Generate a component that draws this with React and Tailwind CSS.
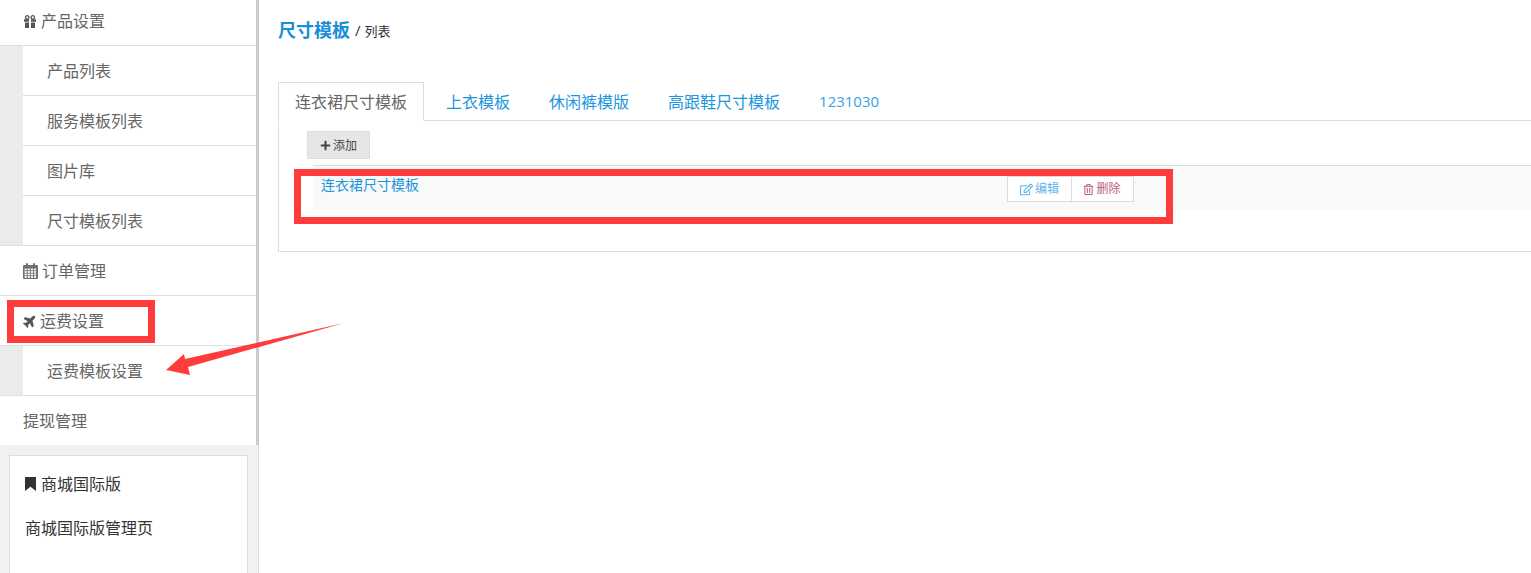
import { FaPlane, FaPlus, FaRegEdit, FaRegTrashAlt } from "react-icons/fa";

function GiftIcon() {
  return (
    <svg width="14" height="13" viewBox="0 0 14 13" className="mr-[4px] shrink-0">
      <circle cx="4.2" cy="2.4" r="1.7" fill="none" stroke="#555" strokeWidth="1.3" />
      <circle cx="9.8" cy="2.4" r="1.7" fill="none" stroke="#555" strokeWidth="1.3" />
      <path d="M1 4.2h5v2.6H1zM8 4.2h5v2.6H8zM2 7.6h4V13H2zM8 7.6h4V13H8z" fill="#555" />
    </svg>
  );
}

function CalendarIcon() {
  const cells = [];
  for (let r = 0; r < 4; r++) {
    for (let c = 0; c < 4; c++) {
      cells.push(<rect key={`${r}-${c}`} x={1.6 + c * 3.1} y={5.6 + r * 2.5} width="2.2" height="1.7" fill="#fff" />);
    }
  }
  return (
    <svg width="15" height="16" viewBox="0 0 15 16" className="mr-[4px] shrink-0">
      <rect x="0" y="2" width="15" height="14" rx="1.2" fill="#707070" />
      <rect x="3" y="0" width="2" height="4" rx="1" fill="#707070" />
      <rect x="10" y="0" width="2" height="4" rx="1" fill="#707070" />
      {cells}
    </svg>
  );
}

function BookmarkIcon() {
  return (
    <svg width="11" height="14" viewBox="0 0 11 14" className="mr-[5px] shrink-0">
      <path d="M0 0h11v14l-5.5-4.2L0 14z" fill="#333" />
    </svg>
  );
}

function SubMenu({ items }) {
  return (
    <div className="flex bg-[#ebebeb] border-b border-[#e0e0e0]">
      <div className="w-[23px]" />
      <div className="flex-1 bg-white">
        {items.map((name, i) => (
          <div
            key={name}
            className={
              i === items.length - 1
                ? "h-[49px] pl-6 flex items-center text-[#666]"
                : "h-[50px] pl-6 flex items-center text-[#666] border-b border-[#e0e0e0]"
            }
          >
            {name}
          </div>
        ))}
      </div>
    </div>
  );
}

function MenuRow({ icon, children, className = "h-[50px]" }) {
  return (
    <div className={`${className} pl-[23px] flex items-center text-[#666] border-b border-[#e0e0e0]`}>
      {icon}
      {children}
    </div>
  );
}

function Sidebar() {
  return (
    <div className="w-[259px] shrink-0 flex flex-col text-base">
      <div className="w-[259px] border-r-[3px] border-[#cccccc] bg-white">
        <MenuRow className="h-[46px] pb-[3px]" icon={<GiftIcon />}>
          产品设置
        </MenuRow>
        <SubMenu items={["产品列表", "服务模板列表", "图片库", "尺寸模板列表"]} />
        <MenuRow icon={<CalendarIcon />}>订单管理</MenuRow>
        <MenuRow icon={<FaPlane className="text-[14px] text-[#555] mr-[3px] -rotate-45" />}>运费设置</MenuRow>
        <SubMenu items={["运费模板设置"]} />
        <div className="h-[49px] pl-[23px] flex items-center text-[#666]">提现管理</div>
      </div>
      <div className="flex-1 bg-[#f1f1f1] pt-[10px] pl-[9px] pr-[10px] border-r border-[#dddddd]">
        <div className="h-[200px] bg-white border border-[#dddddd] text-[#333] pl-[15px]">
          <div className="flex items-center mt-[17px] h-[22px]">
            <BookmarkIcon />
            商城国际版
          </div>
          <div className="mt-[22px] h-[22px] flex items-center">商城国际版管理页</div>
        </div>
      </div>
    </div>
  );
}

function Tabs() {
  const tabs = ["上衣模板", "休闲裤模版", "高跟鞋尺寸模板"];
  return (
    <div className="flex h-[39px] border-b border-[#dddddd] gap-[5px] text-base">
      <div className="h-[39px] px-4 pt-px border border-b-white border-[#dddddd] bg-white text-[#666] flex items-center">
        连衣裙尺寸模板
      </div>
      {tabs.map(t => (
        <div key={t} className="px-[17px] pt-px flex items-center text-[#1b95e0]">
          {t}
        </div>
      ))}
      <div className="px-[17px] pt-px flex items-center text-[15px] text-[#3a9fe0]">1231030</div>
    </div>
  );
}

export default function App() {
  return (
    <div className="relative h-screen overflow-hidden flex bg-white [font-family:'Open_Sans','Noto_Sans_CJK_SC',sans-serif]">
      <Sidebar />
      <div className="pl-[19px] w-[1300px] shrink-0">
        <div className="flex items-start pt-[17px] h-[82px]">
          <span className="text-lg font-bold text-[#1a8fd8] leading-[26px]">尺寸模板</span>
          <span className="ml-[5px] text-[13px] text-[#333] leading-[26px]">
            <span className="text-[15px] mr-[4px]">/</span>列表
          </span>
        </div>
        <Tabs />
        <div className="h-[131px] border-x border-b border-[#dddddd] pt-[10px] pl-[28px]">
          <button className="h-7 w-[63px] pt-px flex items-center justify-center bg-[#e6e6e6] border border-[#dddddd] text-xs text-[#444]">
            <FaPlus className="text-[11px] mr-[2px]" />
            添加
          </button>
          <div className="mt-[6px] ml-[6px] h-[45px] bg-[#f9f9f9] border-t border-[#dddddd] flex">
            <div className="w-[694px] pl-2 pt-[9px] text-sm leading-[20px] text-[#1b95e0]">连衣裙尺寸模板</div>
            <div className="flex h-[26px] mt-[10px] bg-white border border-[#dddddd] text-xs">
              <div className="w-[64px] flex items-center justify-center text-[#5fb6ec] border-r border-[#dddddd]">
                <FaRegEdit className="text-[13px] mr-[2px]" />
                编辑
              </div>
              <div className="w-[61px] pr-px flex items-center justify-center text-[#b9607c]">
                <FaRegTrashAlt className="text-[11px] mr-[2px]" />
                删除
              </div>
            </div>
          </div>
        </div>
      </div>

      {/* red annotations drawn over the page */}
      <div className="absolute left-[7px] top-[300px] w-[148px] h-[43px] border-[7px] border-[#ff3b3b]" />
      <div className="absolute left-[294px] top-[169px] w-[879px] h-[55px] border-[7px] border-[#ff3b3b]" />
      <svg className="absolute left-0 top-0 pointer-events-none" width="400" height="400">
        <polygon points="344,323 185,359 184,354 166,370 190,375 188,367" fill="#ff3b3b" />
      </svg>
    </div>
  );
}
